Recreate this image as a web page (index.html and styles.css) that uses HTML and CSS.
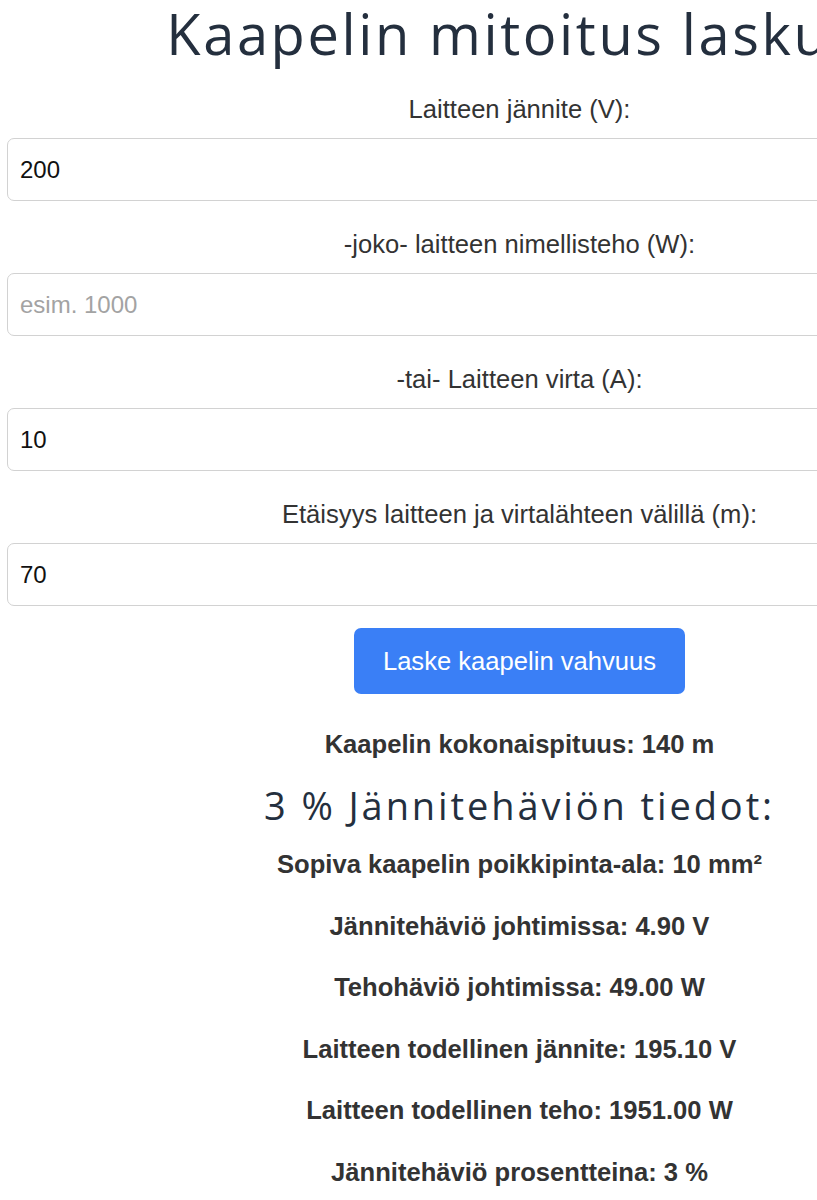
FILE: index.html
```html
<!DOCTYPE html>
<html lang="fi">
<head>
  <meta charset="UTF-8" />
  <meta name="viewport" content="width=device-width, initial-scale=1.0"/>
  <title>Kaapelin mitoitus laskuri</title>
  <link rel="stylesheet" href="styles.css">
</head>
<body>
  <div class="container">
    <h1>Kaapelin mitoitus laskuri</h1>

    <div class="field">
      <label for="voltage">Laitteen jännite (V):</label>
      <input type="number" id="voltage" value="200" />
    </div>

    <div class="field">
      <label for="power">-joko- laitteen nimellisteho (W):</label>
      <input type="number" id="power" placeholder="esim. 1000" />
    </div>

    <div class="field">
      <label for="current">-tai- Laitteen virta (A):</label>
      <input type="number" id="current" value="10" />
    </div>

    <div class="field">
      <label for="distance">Etäisyys laitteen ja virtalähteen välillä (m):</label>
      <input type="number" id="distance" value="70" />
    </div>

    <div class="actions">
      <button type="button">Laske kaapelin vahvuus</button>
    </div>

    <div id="results">
      <p class="total">Kaapelin kokonaispituus: 140 m</p>
      <h2>3 % Jännitehäviön tiedot:</h2>
      <p>Sopiva kaapelin poikkipinta-ala: 10 mm²</p>
      <p>Jännitehäviö johtimissa: 4.90 V</p>
      <p>Tehohäviö johtimissa: 49.00 W</p>
      <p>Laitteen todellinen jännite: 195.10 V</p>
      <p>Laitteen todellinen teho: 1951.00 W</p>
      <p>Jännitehäviö prosentteina: 3 %</p>
    </div>
  </div>
</body>
</html>
```

FILE: styles.css
```css
body {
  font-family: "Liberation Sans", Arial, sans-serif;
  background-color: #ffffff;
  color: #333333;
  margin: 0;
  padding: 0 7px;
}
.container {
  width: 1025px;
  text-align: center;
}
h1, h2 {
  font-family: "Open Sans", sans-serif;
  font-weight: 500;
  color: #242f3e;
  margin: 0;
}
h1 {
  font-size: 56px;
  line-height: 66px;
  letter-spacing: 2.6px;
  white-space: nowrap;
}
.field {
  margin-top: 28px;
}
.field label {
  display: block;
  font-size: 25.6px;
  line-height: 30px;
  margin-bottom: 14px;
}
.field input {
  display: block;
  box-sizing: border-box;
  width: 100%;
  height: 63px;
  padding: 0 12px;
  border: 1.5px solid #d2d2d2;
  border-radius: 7px;
  font-family: "Liberation Sans", Arial, sans-serif;
  font-size: 24px;
  color: #111111;
  background: #ffffff;
  -moz-appearance: textfield;
}
.field input::placeholder {
  color: #a3a3a3;
}
.field input::-webkit-inner-spin-button,
.field input::-webkit-outer-spin-button {
  -webkit-appearance: none;
}
.actions {
  margin-top: 22px;
}
button {
  background-color: #3a7ff6;
  color: #ffffff;
  height: 66px;
  padding: 0 29px;
  border: none;
  border-radius: 7px;
  font-family: "Liberation Sans", Arial, sans-serif;
  font-size: 25.6px;
  cursor: pointer;
}
button:hover {
  background-color: #2f6fe0;
}
#results p {
  font-size: 25.6px;
  font-weight: bold;
  line-height: 30px;
  margin: 31.6px 0 0;
}
#results p.total {
  margin-top: 35px;
}
#results h2 {
  font-size: 38px;
  line-height: 50px;
  letter-spacing: 2.9px;
  margin-top: 21px;
}
#results h2 + p {
  margin-top: 19px;
}
```
